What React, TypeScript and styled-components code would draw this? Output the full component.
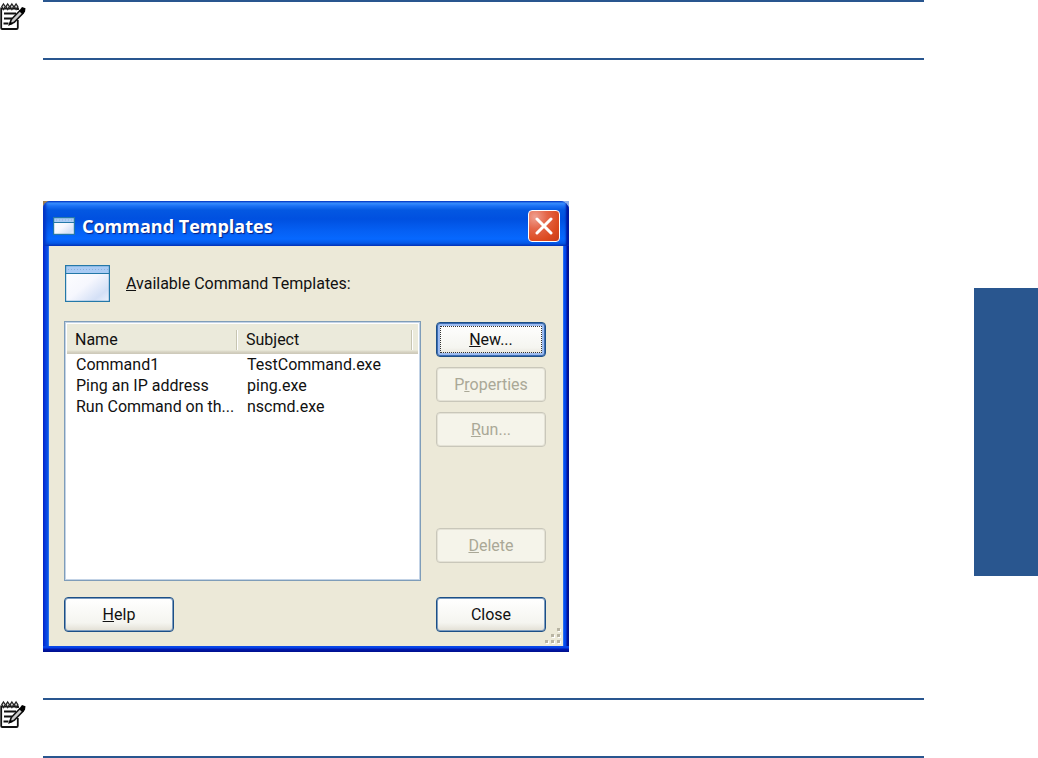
import React from "react";
import styled, { createGlobalStyle } from "styled-components";

const GlobalStyle = createGlobalStyle`
  *, *::before, *::after { box-sizing: border-box; }
  body { margin: 0; background: #fff; }
`;

const uiFont = `Roboto, "Liberation Sans", sans-serif`;

const Page = styled.div`
  display: flex;
  align-items: flex-start;
  gap: 50px;
  font-family: ${uiFont};
  font-size: 16px;
  line-height: 21px;
  color: #111;
`;

const Content = styled.main`
  flex: 1;
  min-width: 0;
  display: flex;
  flex-direction: column;
`;

const ChapterTab = styled.aside`
  width: 64px;
  height: 288px;
  margin-top: 288px;
  background: #29568f;
`;

const Note = styled.section`
  display: flex;
  gap: 17px;
`;

const NoteBody = styled.div`
  flex: 1;
  height: 60px;
  border: solid #29568f;
  border-width: 2px 0;
`;

const Figure = styled.div`
  margin: 141px 0 46px 43px;
`;

const Frame = styled.div`
  max-width: 526px;
  background: linear-gradient(to right, #a08050 50%, #8fb0e8 50%);
`;

const Dialog = styled.section`
  padding: 0 6px 6px;
  border-radius: 8px 9px 0 0;
  overflow: hidden;
  background:
    linear-gradient(to bottom, #0b4ae8 0, #0540e6 2px, #0018b0 3px, #00108c 6px) bottom / 100% 6px no-repeat,
    linear-gradient(to right, #0024c4 0, #0838dc 2px, #0855e6 5px, #4a8af0 6px) left / 6px 100% no-repeat,
    linear-gradient(to right, #4a8af0 0, #0550f0 1px, #0442e8 3px, #00149c 4px, #00108c 6px) right / 6px 100% no-repeat,
    #0450e8;
`;

const TitleBar = styled.header`
  display: flex;
  align-items: center;
  gap: 7px;
  height: 45px;
  margin: 0 -6px;
  padding: 4px 9px 0 10px;
  background: linear-gradient(
    to bottom,
    #0a50d8 0,
    #3a90ff 2px,
    #1b70f4 5px,
    #0458e2 9px,
    #0050e0 18px,
    #0560f4 30px,
    #0668ff 38px,
    #0458e8 42px,
    #0340c0 45px
  );
  box-shadow: inset 3px 0 3px #0434c4, inset -3px 0 2px #0018a0;
`;

const Title = styled.h1`
  flex: 1;
  margin: 0;
  font-family: "Open Sans", "Noto Sans", sans-serif;
  font-size: 18px;
  line-height: 24px;
  font-weight: 700;
  color: #fff;
  text-shadow: 1px 1px 1px #0a1f80;
`;

const CloseBox = styled.button`
  display: flex;
  align-items: center;
  justify-content: center;
  width: 32px;
  height: 32px;
  padding: 0;
  border: 1px solid #fff;
  border-radius: 4px;
  background: radial-gradient(circle at 20% 20%, #f0a090 0, #e4674a 35%, #dc4a20 70%, #c83c18 100%);
`;

const Client = styled.div`
  background: #ece9d8;
  padding: 19px 17px 14px 15px;
  position: relative;
`;

const Intro = styled.div`
  display: flex;
  align-items: center;
  gap: 16px;
  padding: 0 0 0 1px;
  margin-bottom: 19px;
`;

const Columns = styled.div`
  display: flex;
  gap: 15px;
`;

const ListBox = styled.div`
  flex: 1;
  min-width: 0;
  height: 260px;
  padding: 2px;
  border: 1px solid #7f9db9;
  box-shadow: inset 0 0 0 1px #c3d3e6;
  background: #fff;
`;

const Table = styled.table`
  width: 100%;
  border-collapse: collapse;
  table-layout: fixed;
`;

const HeadCell = styled.th<{ $width?: string }>`
  width: ${(p) => p.$width ?? "auto"};
  height: 30px;
  padding: 0 8px;
  text-align: left;
  font-weight: 400;
  background:
    linear-gradient(to right, #c7c5b2 1px, #fff 1px) right 6px / 2px 20px no-repeat,
    linear-gradient(to bottom, #ebeadb 0, #ebeadb 26px, #d6d2c2 28px, #cbc7b8 30px);
`;

const EndCell = styled.th`
  width: 5px;
  padding: 0;
  background: linear-gradient(to bottom, #ebeadb 0, #ebeadb 26px, #d6d2c2 28px, #cbc7b8 30px);
`;

const Cell = styled.td`
  height: 21px;
  padding: 0 0 0 9px;
  white-space: nowrap;
`;

const Actions = styled.div`
  display: flex;
  flex-direction: column;
  gap: 10px;
  width: 110px;
  padding: 1px 0 18px;
`;

const PushButton = styled.button<{ $focused?: boolean; $last?: boolean }>`
  width: 110px;
  height: 35px;
  margin-top: ${(p) => (p.$last ? "auto" : "0")};
  padding: 0;
  border: 1px solid #1c4f86;
  border-radius: 4px;
  background: linear-gradient(to bottom, #fff 0, #f5f5f0 75%, #e2dfd4 100%);
  box-shadow: ${(p) =>
    p.$focused ? "inset 0 0 0 1px #3c6cb4, inset 0 0 0 3px #9dbcf0" : "inset 0 0 0 1px #7c9cc0"};
  outline: ${(p) => (p.$focused ? "1px dotted #333" : "none")};
  outline-offset: -5px;
  font: inherit;
  color: #111;

  &:disabled {
    border-color: #c9c7ba;
    background: #f5f4ea;
    box-shadow: inset 0 0 0 1px #e4e2d6;
    color: #aaa897;
  }
`;

const Footer = styled.footer`
  display: flex;
  justify-content: space-between;
  margin-top: 16px;
`;

const Grip = styled.svg`
  position: absolute;
  right: 1px;
  bottom: 1px;
`;

function NoteIcon() {
  return (
    <svg width="26" height="32" viewBox="0 -1 26 32" fill="none" aria-hidden="true">
      <path d="M18 9V7.500H1.200V27q0 1 1 1H16.500q1.300 0 1.300-1.300V19" stroke="#111" strokeWidth="1.800" />
      {[3.5, 7.7, 11.9, 16.1].map((x) => (
        <path key={x} d={`M${x} 3l1.700 2.500L${x} 8.500l-1.700-3z`} fill="#ddd" stroke="#222" strokeWidth="1.300" />
      ))}
      <path d="M4 12.500h12M4 17.500h8M3.500 22.500h5" stroke="#111" strokeWidth="1.800" />
      <path d="M9.500 23.500l1.800-5L20 9.500l3 2.800-8.800 9z" fill="#ccc" stroke="#111" strokeWidth="1.600" />
      <path d="M19 10l3-4 3.500 1.200-.5 3.800-2.500 2.200z" fill="#000" />
      <path d="M8.800 24.300l1.400-4 2.800 2.700z" fill="#000" />
    </svg>
  );
}

function WindowIcon({ id, width, height, bar }: { id: string; width: number; height: number; bar: number }) {
  return (
    <svg width={width} height={height} viewBox={`0 0 ${width} ${height}`} aria-hidden="true">
      <defs>
        <linearGradient id={id} x1="0" y1="0" x2="1" y2="1">
          <stop offset="0" stopColor="#fff" />
          <stop offset="0.500" stopColor="#f6f7fe" />
          <stop offset="0.800" stopColor="#d4e0f6" />
          <stop offset="1" stopColor="#eef2fc" />
        </linearGradient>
      </defs>
      <rect width={width} height={height} fill={`url(#${id})`} />
      <rect width={width} height={bar + 1} fill="#a9cbf4" />
      <path d={`M3 ${bar / 2 + 1}H${width - 2}`} stroke="#8fb0dc" strokeDasharray="1 2" />
      <rect y={bar + 1} width={width} height="1" fill="#2478a8" />
      <rect x="0.600" y="0.600" width={width - 1.2} height={height - 1.2} fill="none" stroke="#2478a8" strokeWidth="1.200" />
    </svg>
  );
}

const templates = [
  { name: "Command1", subject: "TestCommand.exe" },
  { name: "Ping an IP address", subject: "ping.exe" },
  { name: "Run Command on th...", subject: "nscmd.exe" },
];

const gripDots = [
  [12, 0],
  [6, 6],
  [12, 6],
  [0, 12],
  [6, 12],
  [12, 12],
];

function CommandTemplatesDialog() {
  return (
    <Frame>
      <Dialog role="dialog" aria-labelledby="dialog-title">
        <TitleBar>
          <WindowIcon id="title-icon" width={22} height={18} bar={4} />
          <Title id="dialog-title">Command Templates</Title>
          <CloseBox type="button" aria-label="Close window">
            <svg width="18" height="18" viewBox="0 0 18 18" aria-hidden="true">
              <path d="M2 2l14 14M16 2L2 16" stroke="#fff" strokeWidth="3" strokeLinecap="round" />
            </svg>
          </CloseBox>
        </TitleBar>
        <Client>
          <Intro>
            <WindowIcon id="header-icon" width={45} height={37} bar={7} />
            <span id="list-label">
              <u>A</u>vailable Command Templates:
            </span>
          </Intro>
          <Columns>
            <ListBox>
              <Table aria-labelledby="list-label">
                <thead>
                  <tr>
                    <HeadCell scope="col" $width="171px">Name</HeadCell>
                    <HeadCell scope="col">Subject</HeadCell>
                    <EndCell aria-hidden="true" />
                  </tr>
                </thead>
                <tbody>
                  {templates.map((t) => (
                    <tr key={t.name}>
                      <Cell>{t.name}</Cell>
                      <Cell>{t.subject}</Cell>
                    </tr>
                  ))}
                </tbody>
              </Table>
            </ListBox>
            <Actions>
              <PushButton type="button" $focused>
                <u>N</u>ew...
              </PushButton>
              <PushButton type="button" disabled>
                P<u>r</u>operties
              </PushButton>
              <PushButton type="button" disabled>
                <u>R</u>un...
              </PushButton>
              <PushButton type="button" disabled $last>
                <u>D</u>elete
              </PushButton>
            </Actions>
          </Columns>
          <Footer>
            <PushButton type="button">
              <u>H</u>elp
            </PushButton>
            <PushButton type="button">Close</PushButton>
          </Footer>
          <Grip width="17" height="17" viewBox="0 0 17 17" aria-hidden="true">
            {gripDots.map(([x, y]) => (
              <g key={`${x}-${y}`}>
                <rect x={x + 1} y={y + 1} width="3" height="3" fill="#fff" />
                <rect x={x} y={y} width="3" height="3" fill="#b8b4a3" />
              </g>
            ))}
          </Grip>
        </Client>
      </Dialog>
    </Frame>
  );
}

export default function App() {
  return (
    <>
      <GlobalStyle />
      <Page>
        <Content>
          <Note>
            <NoteIcon />
            <NoteBody />
          </Note>
          <Figure>
            <CommandTemplatesDialog />
          </Figure>
          <Note>
            <NoteIcon />
            <NoteBody />
          </Note>
        </Content>
        <ChapterTab />
      </Page>
    </>
  );
}
